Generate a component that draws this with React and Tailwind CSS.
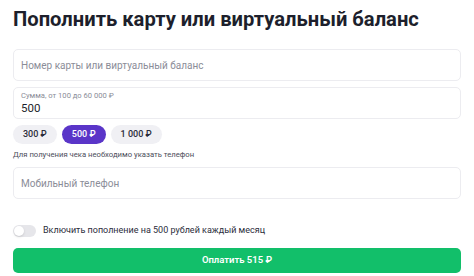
import React, { useState } from 'react';

const font = { fontFamily: 'Roboto, "Noto Sans", sans-serif' };

function Field({ placeholder }) {
  return (
    <div className="h-[32px] rounded-[5px] border border-[#ececf0] bg-white flex items-center px-[7px]">
      <span className="text-[10px] text-[#8b8d98]">{placeholder}</span>
    </div>
  );
}

export default function App() {
  const [amount, setAmount] = useState(500);
  const chips = [300, 500, 1000];

  return (
    <div className="w-[474px] h-[276px] bg-white overflow-hidden px-[13px] pt-[5px]" style={font}>
      <h1 className="text-[20.2px] font-bold text-[#1d1f2c] leading-[28px] whitespace-nowrap">
        Пополнить карту или виртуальный баланс
      </h1>

      <div className="mt-[16px] w-[448px]">
        <Field placeholder="Номер карты или виртуальный баланс" />

        <div className="mt-[6px] h-[32px] rounded-[5px] border border-[#ececf0] bg-white flex flex-col justify-center px-[7px]">
          <span className="text-[7.6px] leading-[10px] text-[#8b8d98]">Сумма, от 100 до 60 000 ₽</span>
          <span className="text-[11.5px] leading-[15px] text-[#1d1f2c]">{amount}</span>
        </div>

        <div className="mt-[6px] flex gap-[5px]">
          {chips.map((c) => (
            <button
              key={c}
              onClick={() => setAmount(c)}
              className={
                c === amount
                  ? 'h-[19px] px-[10px] rounded-full bg-[#5a35c8] text-white text-[9px] font-medium'
                  : 'h-[19px] px-[10px] rounded-full bg-[#f0f0f4] text-[#2b2d3a] text-[9px] font-medium'
              }
            >
              {c.toLocaleString('ru-RU')} ₽
            </button>
          ))}
        </div>

        <p className="mt-[6px] text-[7.7px] leading-[10px] text-[#4b4d5a]">
          Для получения чека необходимо указать телефон
        </p>

        <div className="mt-[7px]">
          <Field placeholder="Мобильный телефон" />
        </div>

        <div className="mt-[25px] flex items-center gap-[7px]">
          <div className="w-[23px] h-[12px] rounded-full bg-[#e6e6ea] flex items-center px-[1px]">
            <div className="w-[10px] h-[10px] rounded-full bg-white shadow-sm" />
          </div>
          <span className="text-[9px] text-[#2b2d3a]">Включить пополнение на 500 рублей каждый месяц</span>
        </div>

        <button className="mt-[10px] w-full h-[25px] rounded-[5px] bg-[#12bf6a] text-white text-[9.5px] font-semibold">
          Оплатить 515 ₽
        </button>
      </div>
    </div>
  );
}
